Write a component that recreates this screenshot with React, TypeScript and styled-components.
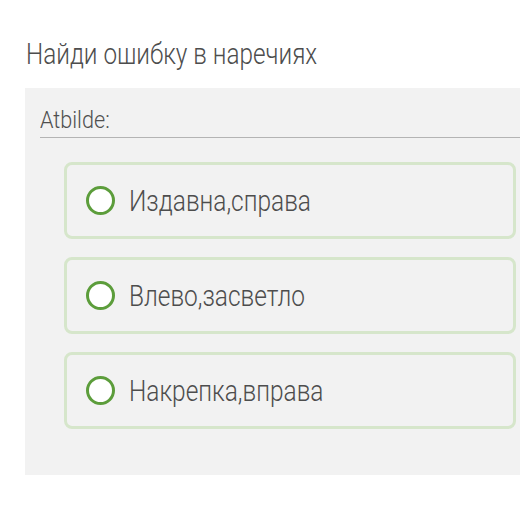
import React from "react";
import styled, { createGlobalStyle } from "styled-components";

const Global = createGlobalStyle`
  html, body { margin: 0; padding: 0; background: #ffffff; }
  body { font-family: Roboto, "Noto Sans", sans-serif; }
`;

const Page = styled.div`
  width: 520px;
  height: 520px;
  overflow: hidden;
  padding-top: 36px;
  box-sizing: border-box;
`;

const Title = styled.h1`
  display: inline-block;
  margin: 0 0 0 26px;
  font-weight: 300;
  font-size: 30px;
  line-height: 36px;
  color: #4d4d4d;
  white-space: nowrap;
  transform: scaleX(0.81);
  transform-origin: left center;
`;

const Panel = styled.div`
  margin: 16px 0 0 25px;
  width: 520px;
  height: 387px;
  background: #f2f2f2;
  padding: 18px 0 0 15px;
  box-sizing: border-box;
`;

const Label = styled.div`
  padding-bottom: 3px;
  border-bottom: 1px solid #b4b4b4;
`;

const LabelText = styled.span`
  display: inline-block;
  font-weight: 300;
  font-size: 24px;
  line-height: 28px;
  color: #4f4f4f;
  transform: scaleX(0.9);
  transform-origin: left center;
`;

const Options = styled.div`
  display: flex;
  flex-direction: column;
  gap: 18px;
  margin: 24px 0 0 24px;
  width: 452px;
`;

const Option = styled.div`
  display: flex;
  align-items: center;
  gap: 14px;
  height: 77px;
  box-sizing: border-box;
  border: 3px solid #d6e6cb;
  border-radius: 8px;
  padding-left: 19px;
`;

const Radio = styled.span`
  width: 29px;
  height: 29px;
  box-sizing: border-box;
  border-radius: 50%;
  border: 3px solid #5c9d3b;
  background: #ffffff;
  flex: none;
`;

const OptionText = styled.span`
  display: inline-block;
  font-weight: 300;
  font-size: 30px;
  color: #4d4d4d;
  white-space: nowrap;
  transform: scaleX(0.815);
  transform-origin: left center;
`;

const options = ["Издавна,справа", "Влево,засветло", "Накрепка,вправа"];

export default function App() {
  return (
    <Page>
      <Global />
      <Title>Найди ошибку в наречиях</Title>
      <Panel>
        <Label>
          <LabelText>Atbilde:</LabelText>
        </Label>
        <Options>
          {options.map((o) => (
            <Option key={o}>
              <Radio />
              <OptionText>{o}</OptionText>
            </Option>
          ))}
        </Options>
      </Panel>
    </Page>
  );
}
